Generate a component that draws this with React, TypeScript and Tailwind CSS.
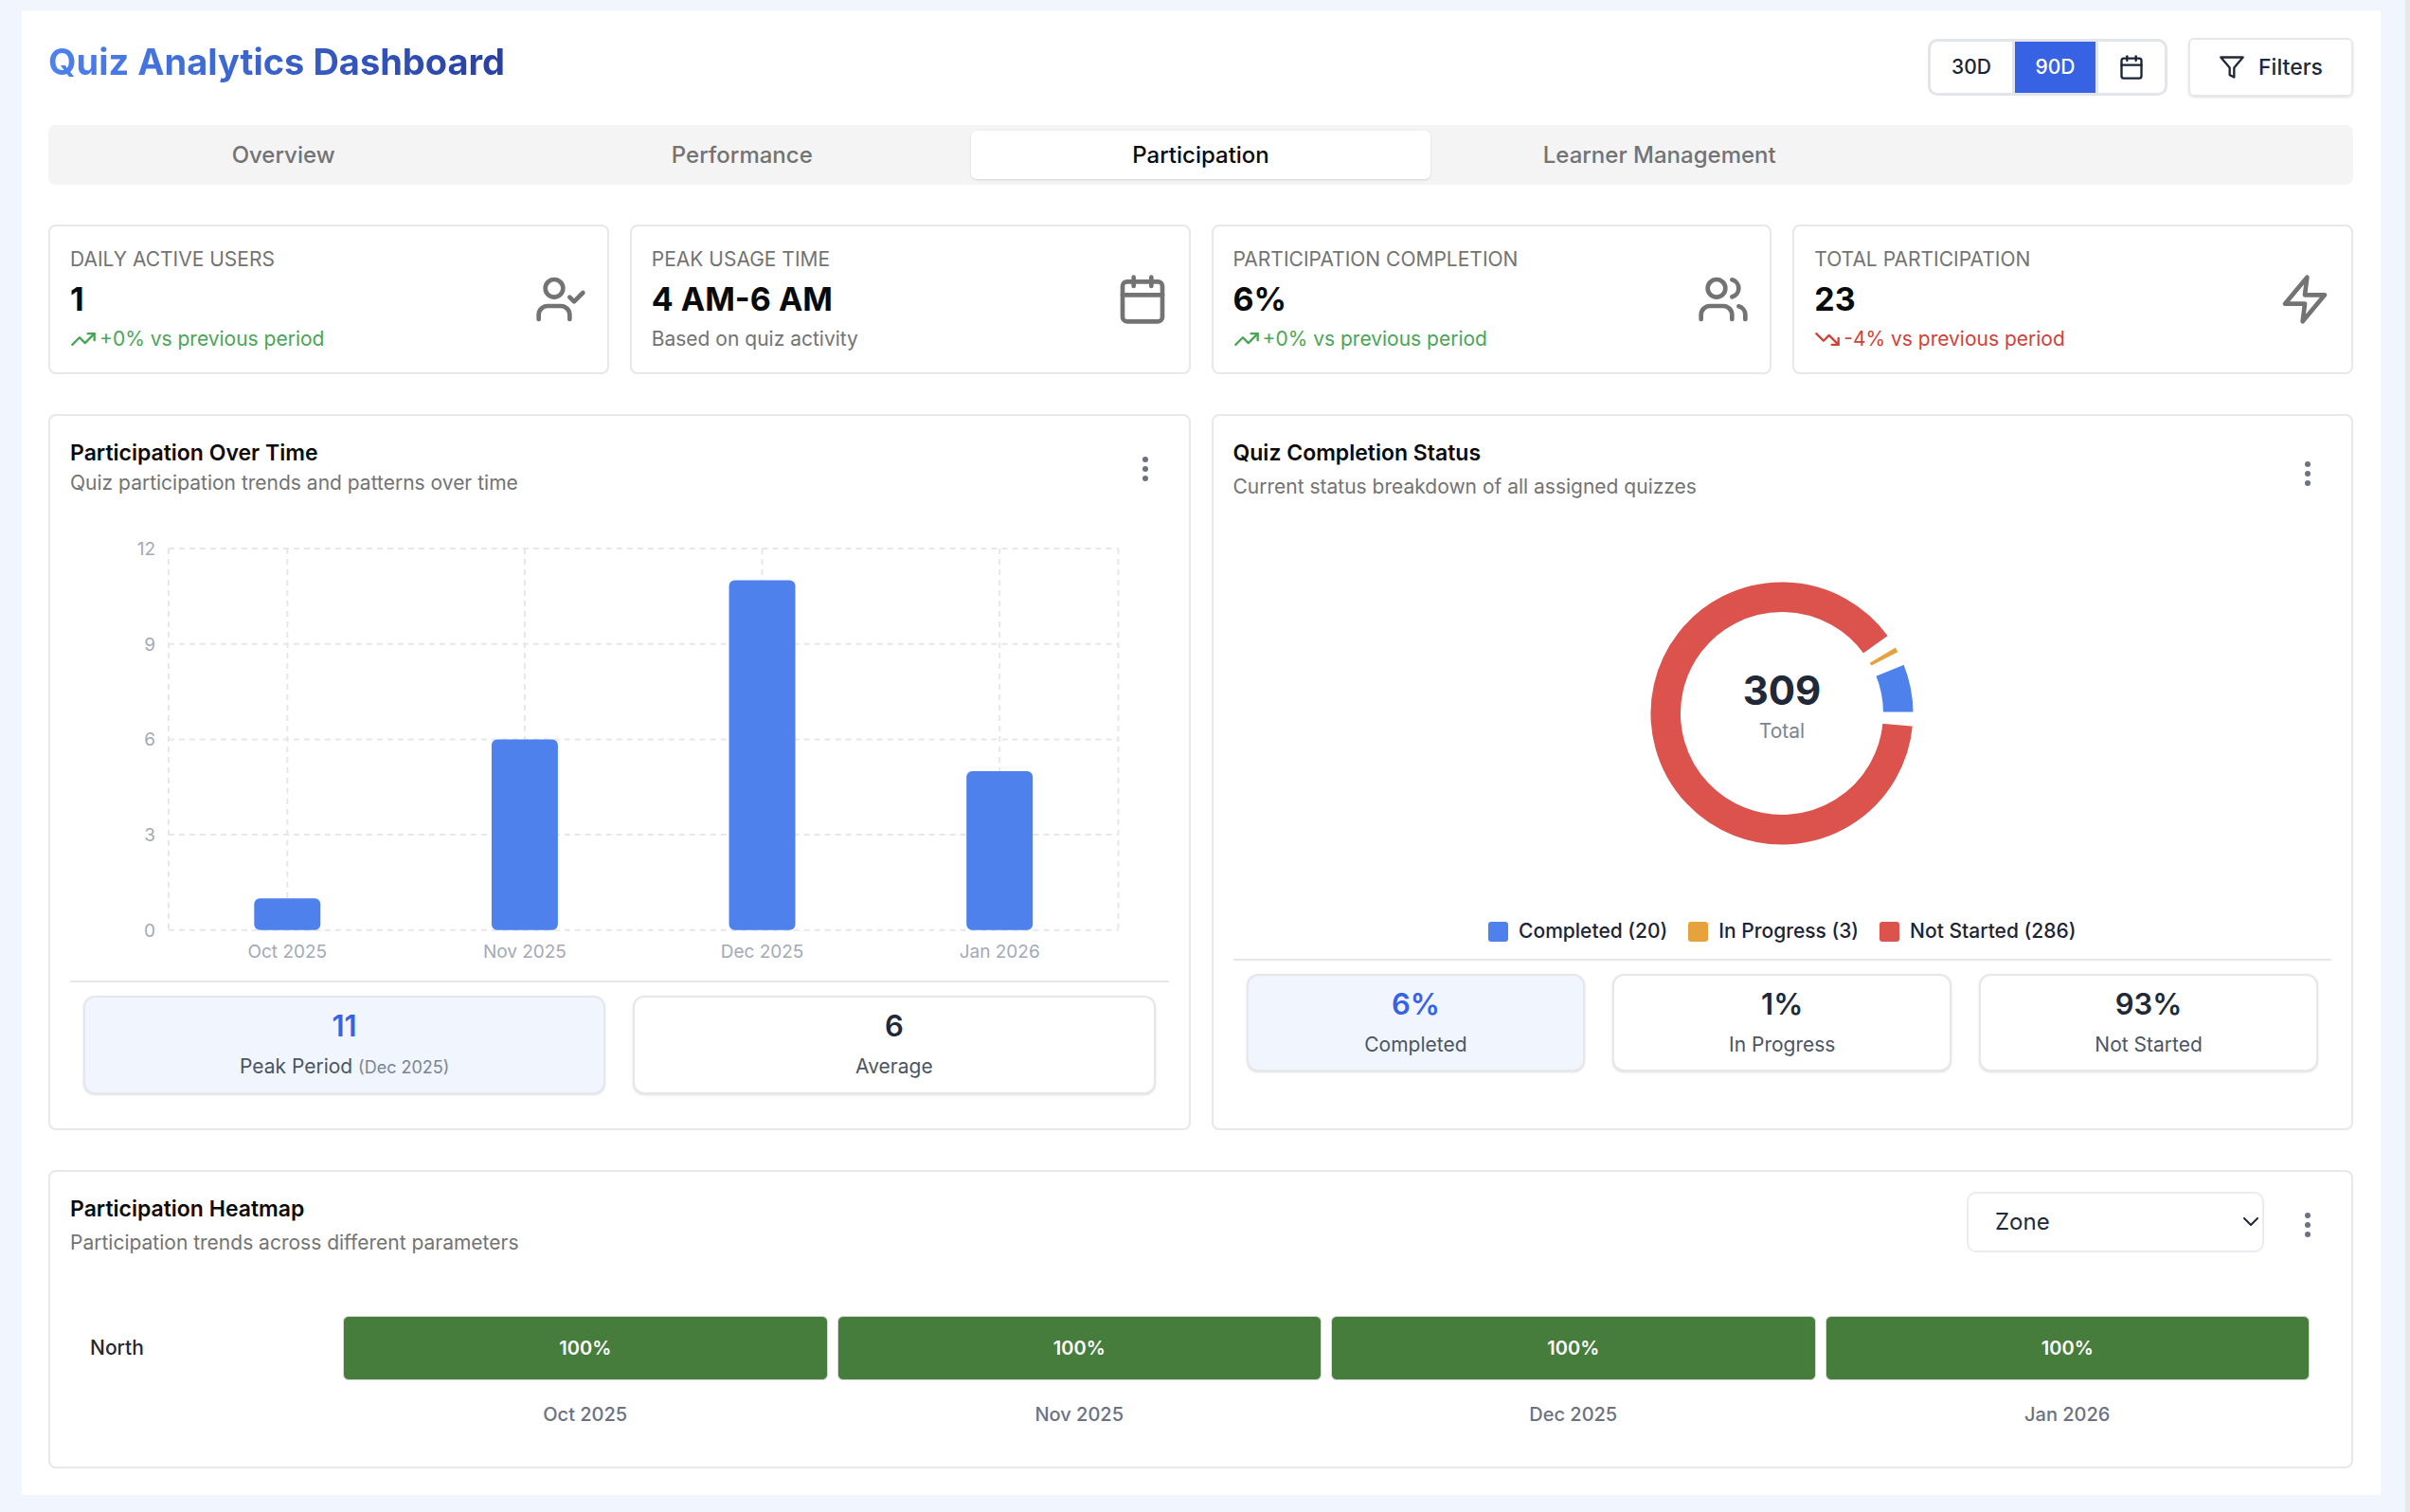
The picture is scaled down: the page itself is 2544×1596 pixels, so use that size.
import React from 'react';
import { Calendar, TrendingDown, TrendingUp, UserCheck, Users } from 'lucide-react';

const tabs = ['Overview', 'Performance', 'Participation', 'Learner Management'];
const months = [
  { label: 'Oct 2025', value: 1 },
  { label: 'Nov 2025', value: 6 },
  { label: 'Dec 2025', value: 11 },
  { label: 'Jan 2026', value: 5 },
];
const statuses = [
  { label: 'Completed', count: 20, percent: '6%', color: '#4f81ed' },
  { label: 'In Progress', count: 3, percent: '1%', color: '#e6a23c' },
  { label: 'Not Started', count: 286, percent: '93%', color: '#dc524c' },
];

const Zap = () => (
  <svg viewBox="0 0 24 24" className="size-14" fill="none" stroke="currentColor" strokeWidth="2" strokeLinecap="round" strokeLinejoin="round">
    <polygon points="13 2 3 14 12 14 11 22 21 10 12 10 13 2" />
  </svg>
);

const Funnel = () => (
  <svg viewBox="0 0 24 24" className="size-7" fill="none" stroke="currentColor" strokeWidth="2" strokeLinecap="round" strokeLinejoin="round">
    <polygon points="22 3 2 3 10 12.46 10 19 14 21 14 12.46 22 3" />
  </svg>
);

const MenuButton = ({ label }: { label: string }) => (
  <button type="button" aria-label={label} className="flex h-[70px] w-[50px] items-center justify-center text-[#6b7280]">
    <svg viewBox="0 0 28 28" className="size-7" fill="currentColor">
      <circle cx="14" cy="4" r="3" />
      <circle cx="14" cy="14" r="3" />
      <circle cx="14" cy="24" r="3" />
    </svg>
  </button>
);

type KpiProps = {
  label: string;
  value: string;
  note: string;
  trend?: 'up' | 'down';
  icon: React.ReactNode;
};

const KpiCard = ({ label, value, note, trend, icon }: KpiProps) => (
  <div className="flex items-center justify-between rounded-lg border-2 border-[#e8e8e8] p-[21px]">
    <div className="flex flex-col gap-1">
      <p className="text-[21px] leading-7 text-[#737373] uppercase">{label}</p>
      <p className="text-[34px] leading-[48px] font-bold text-[#0a0a0a]">{value}</p>
      <p
        className={
          trend === 'up'
            ? 'flex items-center gap-[3px] text-[21px] leading-7 text-[#49a556]'
            : trend === 'down'
              ? 'flex items-center gap-[3px] text-[21px] leading-7 text-[#d0413a]'
              : 'text-[21px] leading-7 text-[#737373]'
        }
      >
        {trend === 'up' && <TrendingUp className="size-7" />}
        {trend === 'down' && <TrendingDown className="size-7" />}
        {note}
      </p>
    </div>
    <div className="text-[#737373]">{icon}</div>
  </div>
);

type StatProps = { value: string; label: string; hint?: string; active?: boolean };

const StatTile = ({ value, label, hint, active }: StatProps) => (
  <div
    className={
      active
        ? 'rounded-xl border-2 border-[#e5e7eb] bg-[#f0f5fe] pt-2.5 pb-3 text-center shadow-sm'
        : 'rounded-xl border-2 border-[#e5e7eb] bg-white pt-2.5 pb-3 text-center shadow-sm'
    }
  >
    <p className={active ? 'text-[31px] leading-10 font-semibold text-[#3862e4]' : 'text-[31px] leading-10 font-semibold text-[#1f2937]'}>
      {value}
    </p>
    <p className="mt-[9px] text-[21px] leading-7 text-[#4b5563]">
      {label} {hint && <span className="text-[18px] text-[#7c8493]">{hint}</span>}
    </p>
  </div>
);

const PanelTitle = ({ title, text, gap }: { title: string; text: string; gap?: boolean }) => (
  <div className="self-start">
    <h2 className="text-[23px] leading-9 font-semibold text-[#0a0a0a]">{title}</h2>
    <p className={gap ? 'mt-1 text-[21px] leading-7 text-[#737373]' : 'text-[21px] leading-7 text-[#737373]'}>{text}</p>
  </div>
);

// Plot area: x 104-1107, y 19-422, 12 units high
const BarChart = () => {
  const slot = 1003 / months.length;
  const y = (v: number) => 422 - (v / 12) * 403;
  return (
    <svg viewBox="0 0 1160 475" className="h-auto w-full" role="img" aria-label="Participation over time">
      <g stroke="#e5e7eb" strokeWidth="2" strokeDasharray="6 5" fill="none">
        {[0, 3, 6, 9, 12].map((v) => (
          <line key={v} x1="104" x2="1107" y1={y(v)} y2={y(v)} />
        ))}
        {months.map((m, i) => (
          <line key={m.label} x1={104 + slot * (i + 0.5)} x2={104 + slot * (i + 0.5)} y1="19" y2="422" />
        ))}
        <line x1="104" x2="104" y1="19" y2="422" />
        <line x1="1107" x2="1107" y1="19" y2="422" />
      </g>
      {months.map((m, i) => (
        <rect
          key={m.label}
          x={104 + slot * (i + 0.5) - 35}
          y={y(m.value)}
          width="70"
          height={422 - y(m.value)}
          rx="6"
          fill="#4f81ed"
        />
      ))}
      <g fill="#a3a9b5" fontSize="19">
        {[0, 3, 6, 9, 12].map((v) => (
          <text key={v} x="90" y={y(v) + 7} textAnchor="end">
            {v}
          </text>
        ))}
        {months.map((m, i) => (
          <text key={m.label} x={104 + slot * (i + 0.5)} y="451" textAnchor="middle">
            {m.label}
          </text>
        ))}
      </g>
    </svg>
  );
};

const arc = (start: number, end: number) => {
  const point = (r: number, deg: number) => {
    const a = (deg * Math.PI) / 180;
    return `${150 + r * Math.cos(a)} ${150 - r * Math.sin(a)}`;
  };
  const large = end - start > 180 ? 1 : 0;
  return `M${point(140, start)} A140 140 0 ${large} 0 ${point(140, end)} L${point(105.5, end)} A105.5 105.5 0 ${large} 1 ${point(105.5, start)} Z`;
};

const Donut = () => {
  const total = statuses.reduce((sum, s) => sum + s.count, 0);
  let angle = 0;
  return (
    <svg viewBox="0 0 300 300" className="mx-auto size-[300px]" role="img" aria-label="Quiz completion status">
      {statuses.map((s) => {
        const start = angle;
        const end = start + (s.count / total) * 345;
        angle = end + 5;
        return <path key={s.label} d={arc(start, end)} fill={s.color} stroke="#fff" strokeWidth="3" />;
      })}
      <text x="150" y="141" textAnchor="middle" fontSize="42" fontWeight="700" fill="#1f2937">
        {total}
      </text>
      <text x="150" y="176" textAnchor="middle" fontSize="21" fill="#7c8493">
        Total
      </text>
    </svg>
  );
};

const App: React.FC = () => {
  return (
    <div className="min-h-screen border-r-[5px] border-[#e8e8e8] bg-[#f0f5fe] pt-[11px] pr-[26px] pb-[19px] pl-[23px] font-['Inter','Liberation_Sans',sans-serif]">
      <main className="bg-white pt-[29px] pr-[29px] pb-7 pl-7">
        {/* Header */}
        <header className="flex items-start justify-between">
          <h1 className="bg-linear-to-r from-[#4d82f0] to-[#2840a2] bg-clip-text text-[38px] leading-[50px] font-bold text-transparent">
            Quiz Analytics Dashboard
          </h1>
          <div className="flex items-center gap-[22px]">
            <div className="flex h-[60px] overflow-hidden rounded-[10px] border-[3px] border-[#e2e5ea] text-[21px] font-medium text-[#1b2437]">
              <button type="button" className="w-[86px]">30D</button>
              <button type="button" className="w-[88px] border-l-[3px] border-[#e2e5ea] bg-[#3862e4] text-white">90D</button>
              <button type="button" aria-label="Pick dates" className="flex w-[73px] items-center justify-center border-l-[3px] border-[#e2e5ea]">
                <Calendar className="size-7" />
              </button>
            </div>
            <button type="button" className="flex h-[62px] w-[174px] items-center justify-center gap-3.5 rounded-md border-2 border-[#e8e8e8] text-[23px] font-medium text-[#1f2937] shadow-sm">
              <Funnel />
              Filters
            </button>
          </div>
        </header>

        {/* Tabs */}
        <nav className="mt-[30px] grid h-[63px] grid-cols-5 rounded-lg bg-[#f4f4f4] p-1.5 text-[24px] font-medium">
          {tabs.map((tab) => (
            <button
              key={tab}
              type="button"
              className={tab === 'Participation' ? 'rounded-md bg-white text-[#0a0a0a] shadow' : 'text-[#737373]'}
            >
              {tab}
            </button>
          ))}
        </nav>

        {/* KPI cards */}
        <section className="mt-[42px] grid grid-cols-4 gap-[22px]">
          <KpiCard label="Daily Active Users" value="1" note="+0% vs previous period" trend="up" icon={<UserCheck className="size-14" />} />
          <KpiCard label="Peak Usage Time" value="4 AM-6 AM" note="Based on quiz activity" icon={<Calendar className="size-14" />} />
          <KpiCard label="Participation Completion" value="6%" note="+0% vs previous period" trend="up" icon={<Users className="size-14" />} />
          <KpiCard label="Total Participation" value="23" note="-4% vs previous period" trend="down" icon={<Zap />} />
        </section>

        {/* Charts */}
        <section className="mt-[42px] grid grid-cols-2 gap-[22px]">
          <div className="rounded-lg border-2 border-[#e8e8e8] px-[21px] pt-[21px] pb-9">
            <div className="flex h-[70px] items-center justify-between">
              <PanelTitle title="Participation Over Time" text="Quiz participation trends and patterns over time" />
              <MenuButton label="Participation over time options" />
            </div>
            <div className="mt-[30px]">
              <BarChart />
            </div>
            <div className="grid grid-cols-2 gap-[29px] border-t-2 border-[#e5e7eb] px-3.5 pt-3.5">
              <StatTile value="11" label="Peak Period" hint="(Dec 2025)" active />
              <StatTile value="6" label="Average" />
            </div>
          </div>

          <div className="rounded-lg border-2 border-[#e8e8e8] px-[21px] pt-[21px] pb-9">
            <div className="flex h-20 items-center justify-between">
              <PanelTitle title="Quiz Completion Status" text="Current status breakdown of all assigned quizzes" gap />
              <MenuButton label="Quiz completion options" />
            </div>
            <div className="pt-[63px]">
              <Donut />
            </div>
            <ul className="mt-[66px] flex justify-center gap-[22px] text-[21px] leading-7 font-medium text-[#1b2437]">
              {statuses.map((s) => (
                <li key={s.label} className="flex items-center gap-[11px]">
                  <span className="size-[21px] rounded-[3px]" style={{ backgroundColor: s.color }} />
                  {s.label} ({s.count})
                </li>
              ))}
            </ul>
            <div className="mt-[15px] grid grid-cols-3 gap-[29px] border-t-2 border-[#e5e7eb] px-3.5 pt-3.5">
              {statuses.map((s, i) => (
                <StatTile key={s.label} value={s.percent} label={s.label} active={i === 0} />
              ))}
            </div>
          </div>
        </section>

        {/* Heatmap */}
        <section className="mt-[42px] rounded-lg border-2 border-[#e8e8e8] px-[21px] pt-[21px] pb-[41px]">
          <div className="flex h-[70px] items-start justify-between">
            <PanelTitle title="Participation Heatmap" text="Participation trends across different parameters" gap />
            <div className="flex items-start gap-[21px]">
              <div className="relative">
                <select
                  aria-label="Heatmap parameter"
                  className="h-16 w-[314px] appearance-none rounded-[10px] border-2 border-[#ebecf2] bg-white px-7 text-[24px] text-[#1f2937]"
                >
                  <option>Zone</option>
                </select>
                <svg viewBox="0 0 16 10" className="pointer-events-none absolute top-[27px] right-1.5 h-2.5 w-4" fill="none" stroke="#1f2937" strokeWidth="2" strokeLinecap="round" strokeLinejoin="round">
                  <path d="M1 1l7 7 7-7" />
                </svg>
              </div>
              <MenuButton label="Heatmap options" />
            </div>
          </div>
          <div className="mt-[61px] pr-[13px]">
            <table className="w-full table-fixed border-separate border-spacing-x-2.5 border-spacing-y-0">
              <tbody>
                <tr>
                  <th scope="row" className="w-[268px] pl-[11px] text-left text-[21px] font-medium text-[#1f2937]">
                    North
                  </th>
                  {months.map((m) => (
                    <td key={m.label} className="h-[68px] rounded-md border border-[#d5dbd5] bg-[#467d3d] text-center text-[20px] font-semibold text-white">
                      100%
                    </td>
                  ))}
                </tr>
              </tbody>
              <tfoot>
                <tr>
                  <td />
                  {months.map((m) => (
                    <th key={m.label} scope="col" className="pt-[22px] text-center text-[20px] leading-7 font-medium text-[#6b7280]">
                      {m.label}
                    </th>
                  ))}
                </tr>
              </tfoot>
            </table>
          </div>
        </section>
      </main>
    </div>
  );
};

export default App;
